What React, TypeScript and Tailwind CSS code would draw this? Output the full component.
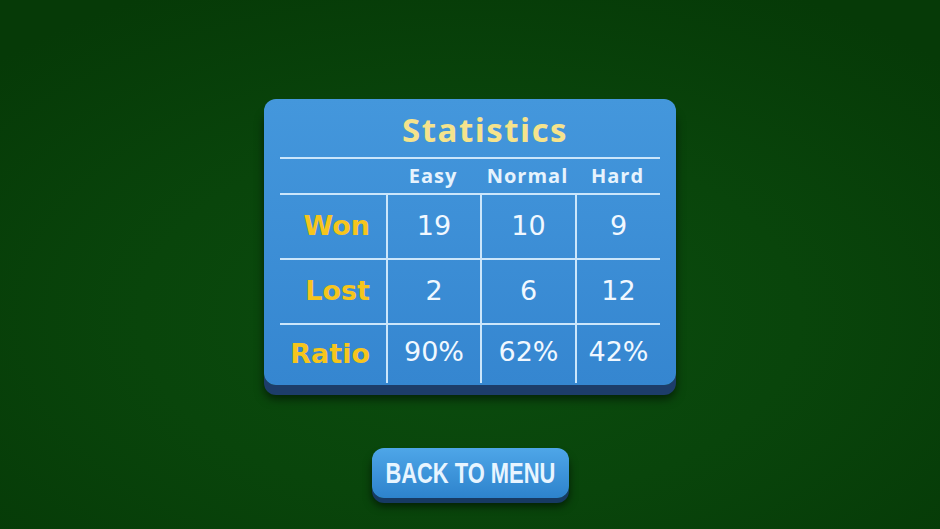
import React from "react";

const cols = ["Easy", "Normal", "Hard"];
const rows: { label: string; values: string[] }[] = [
  { label: "Won", values: ["19", "10", "9"] },
  { label: "Lost", values: ["2", "6", "12"] },
  { label: "Ratio", values: ["90%", "62%", "42%"] },
];

export default function App() {
  return (
    <div
      className="w-[940px] h-[529px] overflow-hidden flex flex-col items-center bg-[#094409]"
      style={{
        backgroundImage:
          "radial-gradient(ellipse 70% 70% at 50% 60%, #0b4d0e 0%, #09450b 50%, #063a07 100%)",
      }}
    >
      {/* Panel */}
      <div className="mt-[99px] w-[412px] h-[286px] rounded-[12px] bg-gradient-to-b from-[#4497dc] to-[#3586d0] shadow-[0_10px_0_#1d3d6a,0_14px_10px_rgba(0,0,0,0.55)] flex flex-col items-center px-[16px]">
        <div
          className="h-[58px] flex items-center justify-center text-[33px] font-bold tracking-[1.5px] text-[#f5e38c] pt-[4px] pl-[30px]"
          style={{ fontFamily: "'Open Sans', 'DejaVu Sans', sans-serif" }}
        >
          Statistics
        </div>
        <div className="w-[380px] border-t-2 border-[#cbe6fb]">
          {/* header row */}
          <div className="flex h-[34px] items-center">
            <div className="w-[106px]" />
            {cols.map((c, i) => (
              <div
                key={c}
                className={`${i === 2 ? "w-[85px]" : i === 1 ? "w-[95px]" : "w-[94px]"} text-center text-[20px] font-bold text-[#e6f3fd] tracking-[1px]`}
                style={{ fontFamily: "'Open Sans', 'DejaVu Sans', sans-serif" }}
              >
                {c}
              </div>
            ))}
          </div>
          {rows.map((r, ri) => (
            <div
              key={r.label}
              className={`flex border-t-2 border-[#cbe6fb] ${ri === 2 ? "h-[60px]" : "h-[65px]"}`}
            >
              <div
                className="w-[106px] flex items-center justify-end pr-[16px] text-[27px] font-bold text-[#f6c51c]"
                style={{ fontFamily: "'DejaVu Sans', Verdana, sans-serif" }}
              >
                {r.label}
              </div>
              {r.values.map((v, i) => (
                <div
                  key={i}
                  className={`${i === 2 ? "w-[85px]" : i === 1 ? "w-[95px]" : "w-[94px]"} border-l-2 border-[#cbe6fb] flex items-center justify-center text-[27px] text-[#f1f8ff] ${ri === 2 ? "pb-[4px]" : ""}`}
                  style={{ fontFamily: "'DejaVu Sans', Verdana, sans-serif" }}
                >
                  {v}
                </div>
              ))}
            </div>
          ))}
        </div>
      </div>

      {/* Button */}
      <div className="mt-[63px] w-[197px] h-[50px] rounded-[12px] bg-gradient-to-b from-[#4ea6e8] to-[#2d83cc] shadow-[0_5px_0_#173a63,0_8px_8px_rgba(0,0,0,0.6)] flex items-center justify-center">
        <span
          className="inline-block scale-x-[0.73] text-[30px] font-bold text-[#e8f5ff] whitespace-nowrap leading-none"
          style={{ fontFamily: "'Liberation Sans', Arial, sans-serif" }}
        >
          BACK TO MENU
        </span>
      </div>
    </div>
  );
}
